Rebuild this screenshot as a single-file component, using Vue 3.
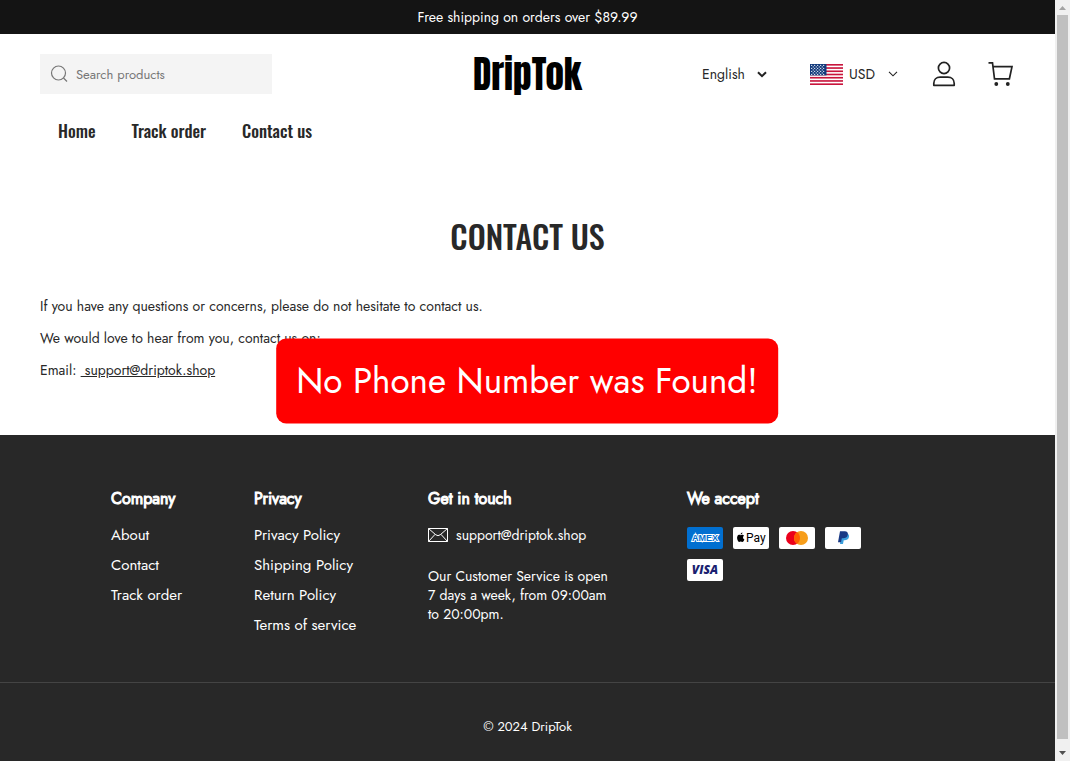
<script setup>
import { ref } from 'vue'

const language = ref('English')
const query = ref('')
const navLinks = ['Home', 'Track order', 'Contact us']
const companyLinks = ['About', 'Contact', 'Track order']
const privacyLinks = ['Privacy Policy', 'Shipping Policy', 'Return Policy', 'Terms of service']

const starRows = [0, 1, 2, 3, 4, 5, 6]
const stars = starRows.flatMap((row) =>
  (row % 2 ? [3.2, 6.2, 9.2, 12.2] : [1.7, 4.7, 7.7, 10.7, 13.7]).map((x) => ({ x, y: 1.4 + row * 1.5 }))
)
</script>

<template>
  <div class="shell">
    <div class="page">
      <div class="announcement">Free shipping on orders over $89.99</div>

      <header class="header">
        <div class="header-row">
          <form class="search" role="search" @submit.prevent>
            <svg width="18" height="18" viewBox="0 0 18 18" aria-hidden="true">
              <circle cx="8.5" cy="8" r="7" fill="none" stroke="#777" stroke-width="1.2" />
              <path d="M13.5 13l3.500 3.500" stroke="#777" stroke-width="1.2" />
            </svg>
            <input v-model="query" type="search" aria-label="Search products" placeholder="Search products" />
          </form>

          <a href="#" class="logo">DripTok</a>

          <div class="tools">
            <div class="language">
              <select v-model="language" aria-label="Language">
                <option>English</option>
              </select>
              <svg width="10" height="7" viewBox="0 0 10 7" aria-hidden="true">
                <path d="M1 1.2l4 4 4-4" fill="none" stroke="#222" stroke-width="2" />
              </svg>
            </div>
            <button type="button" class="currency">
              <svg width="33" height="21" viewBox="0 0 33 21" aria-hidden="true">
                <rect width="33" height="21" fill="#fff" />
                <rect v-for="n in 7" :key="n" x="0" :y="(n - 1) * 3.23" width="33" height="1.62" fill="#c8143c" />
                <rect width="16.5" height="11.4" fill="#123a7c" />
                <circle v-for="(s, i) in stars" :key="'s' + i" :cx="s.x" :cy="s.y" r="0.55" fill="#fff" />
              </svg>
              <span>USD</span>
              <svg class="thin" width="10" height="6" viewBox="0 0 10 6" aria-hidden="true">
                <path d="M1 .8l4 4 4-4" fill="none" stroke="#222" stroke-width="1.1" />
              </svg>
            </button>
            <button type="button" class="icon" aria-label="Account">
              <svg width="24" height="26" viewBox="0 0 24 26" fill="none" stroke="#222" stroke-width="1.7">
                <circle cx="12" cy="7" r="5.6" />
                <path d="M1.8 24.3v-2.1c0-3.700 2.600-6.100 6.300-6.100h7.800c3.700 0 6.300 2.400 6.300 6.100v2.100z" stroke-linejoin="round" />
              </svg>
            </button>
            <button type="button" class="icon" aria-label="Cart">
              <svg width="26" height="26" viewBox="0 0 26 26" fill="none" stroke="#222" stroke-width="1.7">
                <path d="M.5 1.9h4l2 15.900h14.900L24 5.600H5" />
                <circle cx="8.3" cy="23" r="1.9" fill="#222" stroke="none" />
                <circle cx="19.8" cy="23" r="1.9" fill="#222" stroke="none" />
              </svg>
            </button>
          </div>
        </div>

        <nav class="nav">
          <a v-for="link in navLinks" :key="link" href="#">{{ link }}</a>
        </nav>
      </header>

      <main class="main">
        <h1>CONTACT US</h1>
        <p>If you have any questions or concerns, please do not hesitate to contact us.</p>
        <p>We would love to hear from you, contact us on:</p>
        <p>Email: <a href="mailto:support@driptok.shop">&nbsp;support@driptok.shop</a></p>
      </main>

      <footer class="footer">
        <div class="columns">
          <section>
            <h2>Company</h2>
            <ul class="links">
              <li v-for="link in companyLinks" :key="link"><a href="#">{{ link }}</a></li>
            </ul>
          </section>
          <section>
            <h2>Privacy</h2>
            <ul class="links">
              <li v-for="link in privacyLinks" :key="link"><a href="#">{{ link }}</a></li>
            </ul>
          </section>
          <section>
            <h2>Get in touch</h2>
            <a class="mail" href="mailto:support@driptok.shop">
              <svg width="20" height="14" viewBox="0 0 20 14" fill="none" stroke="#fff" aria-hidden="true">
                <path d="M.5.5h19v13H.5zM.5.5l7.3 6.3q2.2 1.7 4.4 0L19.5.5M.5 13.5l6.6-7.2M19.5 13.5l-6.6-7.2" />
              </svg>
              <span>support@driptok.shop</span>
            </a>
            <p class="hours">Our Customer Service is open<br />7 days a week, from 09:00am<br />to 20:00pm.</p>
          </section>
          <section>
            <h2>We accept</h2>
            <div class="cards">
              <svg width="36" height="22" viewBox="0 0 36 22" role="img" aria-label="American Express">
                <rect width="36" height="22" rx="2" fill="#016fd0" />
                <text x="18" y="14" text-anchor="middle" class="amex">AMEX</text>
              </svg>
              <svg width="36" height="22" viewBox="0 0 36 22" role="img" aria-label="Apple Pay">
                <rect width="36" height="22" rx="2" fill="#fff" />
                <path d="M9.4 5.4c.1 1.100-.8 2-1.800 2 0-1 .8-1.900 1.800-2zM11 8.800c-1.500.9-1.200 3 .4 3.600-.4 1.100-1.200 2.500-2.100 2.500-.6 0-.9-.4-1.600-.4s-1 .4-1.600.4C5 14.900 3.300 11.200 4.500 9c.8-1.400 2.100-1.300 3.200-.8.700-.3 2.300-.9 3.300.6z" fill="#000" />
                <text x="13" y="15" class="apple">Pay</text>
              </svg>
              <svg width="36" height="22" viewBox="0 0 36 22" role="img" aria-label="Mastercard">
                <rect width="36" height="22" rx="2" fill="#fff" />
                <circle cx="14" cy="11" r="7" fill="#eb001b" />
                <circle cx="22" cy="11" r="7" fill="#f79e1b" />
                <path d="M18 5.260a7 7 0 0 1 0 11.480a7 7 0 0 1 0-11.480z" fill="#ff5f00" />
              </svg>
              <svg width="36" height="22" viewBox="0 0 36 22" role="img" aria-label="PayPal">
                <rect width="36" height="22" rx="2" fill="#fff" />
                <path d="M16.5 6.500h4.500c2.500 0 3.500 1.600 2.900 3.700-.6 2.200-2.200 3-4.300 3h-.9l-.7 3.900h-3z" fill="#3b9fdc" />
                <path d="M15 4.300h4.800c2.300 0 3.500 1.300 3 3.500-.6 2.600-2.300 3.500-4.700 3.500h-1.300l-.8 4h-3z" fill="#1a3a85" />
              </svg>
              <svg width="36" height="22" viewBox="0 0 36 22" role="img" aria-label="Visa">
                <rect width="36" height="22" rx="2" fill="#fff" />
                <text x="18" y="15" text-anchor="middle" class="visa">VISA</text>
              </svg>
            </div>
          </section>
        </div>
        <div class="copyright">© 2024 DripTok</div>
      </footer>
    </div>

    <div class="scrollbar" aria-hidden="true">
      <svg width="15" height="15" viewBox="0 0 15 15"><path d="M4 10h7L7.5 6z" fill="#a3a3a3" /></svg>
      <div class="thumb"></div>
      <svg width="15" height="22" viewBox="0 0 15 22"><path d="M4 12h7l-3.500 4z" fill="#505050" /></svg>
    </div>

    <div class="toast" role="alert">No Phone Number was Found!</div>
  </div>
</template>

<style>
body {
  margin: 0;
  background: #fff;
}
</style>

<style scoped>
.shell {
  display: flex;
  min-height: 100vh;
  color: #282828;
  font-family: Jost, Lato, sans-serif;
  font-size: 14px;
}
.shell * {
  box-sizing: border-box;
}
.page {
  display: flex;
  flex: 1;
  flex-direction: column;
  min-width: 0;
}
a {
  color: inherit;
  text-decoration: none;
}
button,
input,
select {
  padding: 0;
  border: 0;
  background: none;
  color: inherit;
  font: inherit;
}
svg {
  display: block;
  flex: none;
}
.announcement {
  background: #141414;
  color: #fff;
  line-height: 34px;
  text-align: center;
}
.header {
  padding: 16px 40px 0;
}
.header-row {
  display: grid;
  grid-template-columns: 1fr auto 1fr;
  align-items: center;
  height: 48px;
}
.search {
  display: flex;
  align-items: center;
  gap: 8px;
  width: 232px;
  height: 40px;
  padding: 0 10px;
  background: #f4f4f4;
}
.search input {
  flex: 1;
  min-width: 0;
  height: 20px;
  outline: 0;
  font-size: 13px;
  appearance: none;
}
.search input::placeholder {
  color: #777;
  opacity: 1;
}
.logo {
  color: #000;
  font: 400 37px/48px Anton, Oswald, sans-serif;
}
.tools {
  display: flex;
  align-items: center;
  justify-content: flex-end;
}
.language {
  position: relative;
  width: 66px;
  margin-right: 42px;
}
.language select {
  width: 100%;
  appearance: none;
}
.language svg {
  position: absolute;
  top: 50%;
  right: 1px;
  margin-top: -3px;
  pointer-events: none;
}
.currency {
  display: flex;
  align-items: center;
  gap: 6px;
  width: 88px;
}
.currency .thin {
  margin-left: auto;
}
.icon {
  margin-left: 34px;
}
.icon + .icon {
  margin: 0 1px 0 32px;
}
.nav {
  display: flex;
  gap: 36px;
  padding: 16px 18px 0;
  font: 500 17px/34px Oswald, sans-serif;
}
.main {
  flex: 1;
  padding: 64px 40px 55px;
}
h1 {
  margin: 0 0 36px;
  font: 500 32px/48px Oswald, sans-serif;
  text-align: center;
}
.main p {
  margin: 0 0 12px;
  line-height: 20px;
}
.main p:last-child {
  margin-bottom: 0;
}
.main p a {
  text-decoration: underline;
}
.footer {
  background: #282828;
  color: #fff;
}
.columns {
  display: grid;
  grid-template-columns: 71px 102px 187px 257px;
  justify-content: center;
  gap: 72px;
  padding: 52px 0 42px;
}
h2 {
  margin: 0 0 9px;
  font-size: 16px;
  font-weight: 400;
  line-height: 24px;
  white-space: nowrap;
  -webkit-text-stroke: 1px #fff;
}
.links {
  margin: 0;
  padding: 0;
  list-style: none;
  font-size: 15px;
  line-height: 30px;
  white-space: nowrap;
}
.mail {
  display: flex;
  align-items: center;
  gap: 8px;
  line-height: 30px;
}
.hours {
  margin: 17px 0 0;
  line-height: 19px;
  white-space: nowrap;
}
.cards {
  display: flex;
  flex-wrap: wrap;
  gap: 10px;
  width: 184px;
  padding-top: 7px;
}
.amex {
  fill: #016fd0;
  stroke: #fff;
  stroke-width: 2px;
  paint-order: stroke;
  font: bold 9px "Liberation Sans", sans-serif;
}
.visa {
  fill: #1a1f71;
  font: italic 800 12px "Open Sans", sans-serif;
}
.apple {
  font: 400 12px Roboto, sans-serif;
}
.copyright {
  border-top: 1px solid #444;
  padding: 34px 0 24px;
  font-size: 13px;
  line-height: 20px;
  text-align: center;
}
.scrollbar {
  display: flex;
  flex: none;
  flex-direction: column;
  width: 15px;
  background: #f0f0f0;
}
.thumb {
  flex: 1;
  margin: 0 2px;
  background: #c0c0c0;
}
.toast {
  position: fixed;
  top: 50%;
  left: calc(50% - 8px);
  transform: translate(-50%, -50%);
  padding: 20px;
  border-radius: 10px;
  background: #f00;
  color: #fff;
  font-size: 35px;
  line-height: 45px;
  white-space: nowrap;
}
</style>
